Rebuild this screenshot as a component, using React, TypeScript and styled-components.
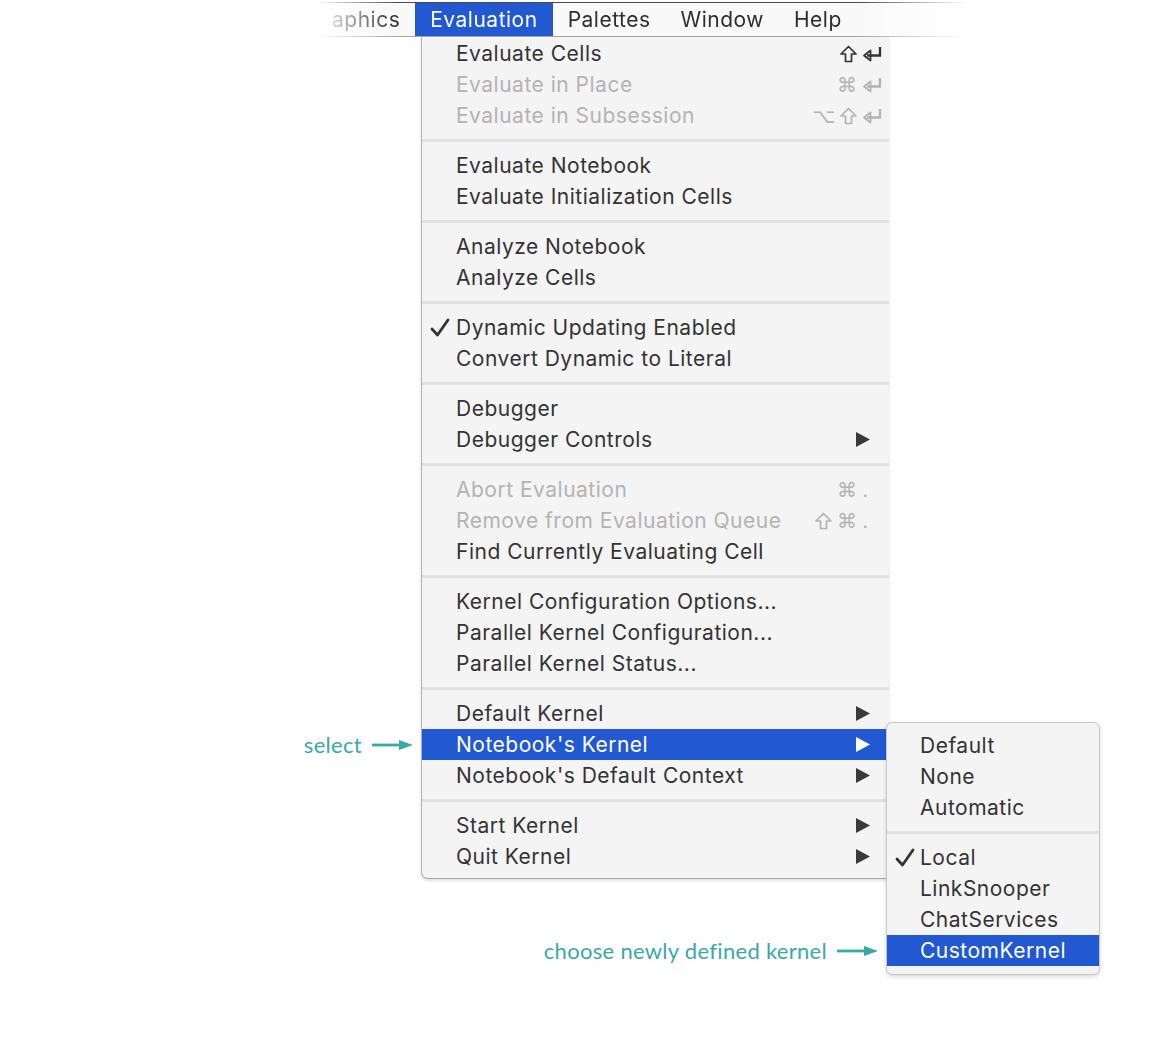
import React from "react";
import styled, { createGlobalStyle } from "styled-components";

type Mod = "shift" | "cmd" | "opt";

type MenuItem = {
  label: string;
  disabled?: boolean;
  checked?: boolean;
  mods?: Mod[];
  keyName?: "return" | ".";
  submenu?: boolean;
  active?: boolean;
};

const BLUE = "#2259d3";
const TEAL = "#38a9a7";

const GlobalStyle = createGlobalStyle`
  body {
    margin: 0;
    background: #ffffff;
    font-family: Inter, "Liberation Sans", sans-serif;
  }
`;

const groups: MenuItem[][] = [
  [
    { label: "Evaluate Cells", mods: ["shift"], keyName: "return" },
    { label: "Evaluate in Place", disabled: true, mods: ["cmd"], keyName: "return" },
    { label: "Evaluate in Subsession", disabled: true, mods: ["opt", "shift"], keyName: "return" },
  ],
  [{ label: "Evaluate Notebook" }, { label: "Evaluate Initialization Cells" }],
  [{ label: "Analyze Notebook" }, { label: "Analyze Cells" }],
  [{ label: "Dynamic Updating Enabled", checked: true }, { label: "Convert Dynamic to Literal" }],
  [{ label: "Debugger" }, { label: "Debugger Controls", submenu: true }],
  [
    { label: "Abort Evaluation", disabled: true, mods: ["cmd"], keyName: "." },
    { label: "Remove from Evaluation Queue", disabled: true, mods: ["shift", "cmd"], keyName: "." },
    { label: "Find Currently Evaluating Cell" },
  ],
  [
    { label: "Kernel Configuration Options..." },
    { label: "Parallel Kernel Configuration..." },
    { label: "Parallel Kernel Status..." },
  ],
  [
    { label: "Default Kernel", submenu: true },
    { label: "Notebook's Kernel", submenu: true, active: true },
    { label: "Notebook's Default Context", submenu: true },
  ],
  [
    { label: "Start Kernel", submenu: true },
    { label: "Quit Kernel", submenu: true },
  ],
];

const kernelGroups: MenuItem[][] = [
  [{ label: "Default" }, { label: "None" }, { label: "Automatic" }],
  [
    { label: "Local", checked: true },
    { label: "LinkSnooper" },
    { label: "ChatServices" },
    { label: "CustomKernel", active: true },
  ],
];

const Page = styled.div`
  width: 1170px;
  height: 1050px;
  padding-top: 2px;
  box-sizing: border-box;
`;

const MenuBar = styled.div`
  display: flex;
  width: 650px;
  height: 33px;
  margin-left: 317px;
  background: #f9f9f9;
  border-top: 1px solid #4a4a4a;
  border-bottom: 1px solid #a6a6a6;
  -webkit-mask-image: linear-gradient(to right, transparent 0, #000 80px, #000 540px, transparent 650px);
  mask-image: linear-gradient(to right, transparent 0, #000 80px, #000 540px, transparent 650px);
`;

const BarItem = styled.div<{ $active?: boolean }>`
  display: flex;
  align-items: center;
  padding: 0 15px;
  font-size: 21px;
  letter-spacing: 0.5px;
  color: ${({ $active }) => ($active ? "#ffffff" : "#2e2e2e")};
  background: ${({ $active }) => ($active ? BLUE : "transparent")};
`;

const Menu = styled.div`
  position: relative;
  width: 467px;
  margin-left: 421px;
  padding-top: 1px;
  padding-bottom: 6px;
  background: #f4f4f4;
  border-left: 1px solid #b2b2b2;
  border-bottom: 1px solid #a9a9a9;
  border-bottom-left-radius: 7px;
  box-shadow: 0 2px 3px rgba(0, 0, 0, 0.12);
`;

const SubMenu = styled.div`
  position: absolute;
  top: -7px;
  left: calc(100% - 3px);
  width: 212px;
  padding: 7px 0 8px;
  background: #f4f4f4;
  border: 1px solid #c6c6c6;
  border-radius: 6px;
  box-shadow: 0 2px 4px rgba(0, 0, 0, 0.14);
  z-index: 2;
`;

const Row = styled.div<{ $active?: boolean; $disabled?: boolean; $pad: number }>`
  position: relative;
  display: flex;
  align-items: center;
  height: 31px;
  padding: 0 7px 0 ${({ $pad }) => $pad}px;
  font-size: 21px;
  letter-spacing: 0.5px;
  white-space: nowrap;
  color: ${({ $active, $disabled }) => ($active ? "#ffffff" : $disabled ? "#b3b3b3" : "#333333")};
  background: ${({ $active }) => ($active ? BLUE : "transparent")};
`;

const CheckCell = styled.span<{ $left: number }>`
  position: absolute;
  left: ${({ $left }) => $left}px;
  top: 6px;
  display: flex;
`;

const Label = styled.span`
  flex: 1;
`;

const Shortcut = styled.span`
  display: flex;
  align-items: center;
  gap: 5px;
`;

const Mods = styled.span`
  display: flex;
  align-items: center;
  gap: 5px;
`;

const KeyBox = styled.span`
  display: flex;
  align-items: center;
  width: 20px;
`;

const Glyph = styled.span`
  font-family: "DejaVu Sans", sans-serif;
  font-size: 20px;
  letter-spacing: 0;
  line-height: 1;
`;

const SubArrow = styled.span`
  display: flex;
  margin-right: 12px;
`;

const Separator = styled.div`
  padding: 8px 0;
  &::after {
    content: "";
    display: block;
    height: 3px;
    background: #e1e1e1;
  }
`;

const Callout = styled.div`
  position: absolute;
  right: calc(100% + 9px);
  top: 0;
  height: 31px;
  display: flex;
  align-items: center;
  gap: 10px;
  color: ${TEAL};
  font-family: Lato, "Open Sans", sans-serif;
  font-size: 22px;
  letter-spacing: 0.3px;
  white-space: nowrap;
`;

const Check = () => (
  <svg width="20" height="19" viewBox="0 0 20 19">
    <path d="M2 11 L7.5 17 L18 2" fill="none" stroke="currentColor" strokeWidth="2.8" strokeLinejoin="round" strokeLinecap="round" />
  </svg>
);

const ShiftIcon = () => (
  <svg width="17" height="18" viewBox="0 0 17 18">
    <path d="M8.5 1.5 L16 9 H11.5 V16.5 H5.5 V9 H1 Z" fill="none" stroke="currentColor" strokeWidth="1.7" strokeLinejoin="round" />
  </svg>
);

const ReturnIcon = () => (
  <svg width="20" height="16" viewBox="0 0 20 16">
    <path d="M18 1 V9.5 H5" fill="none" stroke="currentColor" strokeWidth="2.3" />
    <polygon points="8.5,4.5 2,9.5 8.5,14.5" fill="none" stroke="currentColor" strokeWidth="1.8" strokeLinejoin="round" />
  </svg>
);

const Triangle = ({ color }: { color: string }) => (
  <svg width="14" height="15" viewBox="0 0 14 15">
    <polygon points="0,0 14,7.5 0,15" fill={color} />
  </svg>
);

const Arrow = () => (
  <svg width="41" height="12" viewBox="0 0 41 12">
    <line x1="0" y1="6" x2="30" y2="6" stroke={TEAL} strokeWidth="2.8" />
    <polygon points="27,1 41,6 27,11" fill={TEAL} />
  </svg>
);

const ModKey = ({ mod }: { mod: Mod }) => {
  if (mod === "shift") return <ShiftIcon />;
  if (mod === "cmd") return <Glyph>⌘</Glyph>;
  return <Glyph>⌥</Glyph>;
};

const MenuRow = ({
  item,
  pad,
  checkLeft,
  children,
}: {
  item: MenuItem;
  pad: number;
  checkLeft: number;
  children?: React.ReactNode;
}) => (
  <Row $active={item.active} $disabled={item.disabled} $pad={pad}>
    {item.checked && (
      <CheckCell $left={checkLeft}>
        <Check />
      </CheckCell>
    )}
    <Label>{item.label}</Label>
    {item.keyName && (
      <Shortcut>
        <Mods>
          {item.mods?.map((m) => (
            <ModKey key={m} mod={m} />
          ))}
        </Mods>
        <KeyBox>{item.keyName === "return" ? <ReturnIcon /> : <Glyph>.</Glyph>}</KeyBox>
      </Shortcut>
    )}
    {item.submenu && (
      <SubArrow>
        <Triangle color={item.active ? "#ffffff" : "#3a3a3a"} />
      </SubArrow>
    )}
    {children}
  </Row>
);

const KernelMenu = () => (
  <SubMenu>
    {kernelGroups.map((group, gi) => (
      <React.Fragment key={gi}>
        {gi > 0 && <Separator />}
        {group.map((item) => (
          <MenuRow key={item.label} item={item} pad={33} checkLeft={8}>
            {item.active && (
              <Callout>
                choose newly defined kernel
                <Arrow />
              </Callout>
            )}
          </MenuRow>
        ))}
      </React.Fragment>
    ))}
  </SubMenu>
);

const App: React.FC = () => (
  <Page>
    <GlobalStyle />
    <MenuBar>
      <BarItem>aphics</BarItem>
      <BarItem $active>Evaluation</BarItem>
      <BarItem>Palettes</BarItem>
      <BarItem>Window</BarItem>
      <BarItem>Help</BarItem>
    </MenuBar>
    <Menu>
      {groups.map((group, gi) => (
        <React.Fragment key={gi}>
          {gi > 0 && <Separator />}
          {group.map((item) => (
            <MenuRow key={item.label} item={item} pad={34} checkLeft={8}>
              {item.active && (
                <>
                  <Callout>
                    select
                    <Arrow />
                  </Callout>
                  <KernelMenu />
                </>
              )}
            </MenuRow>
          ))}
        </React.Fragment>
      ))}
    </Menu>
  </Page>
);

export default App;
